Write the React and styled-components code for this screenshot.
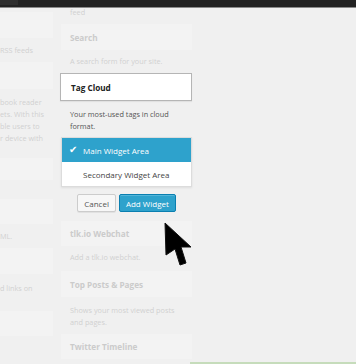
import React from "react";
import styled, { createGlobalStyle } from "styled-components";

const Global = createGlobalStyle`
  html, body { margin: 0; padding: 0; }
  body {
    width: 356px; height: 364px; overflow: hidden;
    background: #f0f0f0;
    font-family: "Open Sans", "Liberation Sans", sans-serif;
  }
`;

const Page = styled.div`
  position: relative;
  width: 356px;
  height: 364px;
  overflow: hidden;
  display: flex;
  flex-direction: column;
  background: #f0f0f0;
`;

const TopBar = styled.div`
  height: 7px;
  flex: none;
  background: #222;
  border-bottom: 1px solid #8a8a8a;
  display: flex;
`;

const BarTab = styled.div`
  width: 18px;
  height: 5px;
  background: #2e2e2e;
`;

const Content = styled.div`
  flex: 1;
  min-height: 0;
  overflow: hidden;
  display: flex;
  gap: 8px;
`;

const Column = styled.div`
  width: ${(p) => p.$w}px;
  flex: none;
  display: flex;
  flex-direction: column;
`;

const Title = styled.div`
  height: ${(p) => p.$h || 26}px;
  flex: none;
  box-sizing: border-box;
  display: flex;
  align-items: center;
  padding-left: ${(p) => (p.$active ? 10 : 9)}px;
  font-size: 8.2px;
  font-weight: 700;
  color: ${(p) => (p.$active ? "#222" : "#cbcbcb")};
  background: ${(p) => (p.$active ? "#fff" : "#f3f3f3")};
  border: ${(p) => (p.$active ? "1px solid #b5b5b5" : "none")};
  margin-left: ${(p) => (p.$active ? -1 : 0)}px;
  box-shadow: ${(p) => (p.$active ? "0 1px 1px rgba(0,0,0,0.06)" : "none")};
`;

const Desc = styled.div`
  padding: ${(p) => p.$pt ?? 6}px ${(p) => (p.$left ? 0 : 9)}px ${(p) => p.$pb ?? 6}px;
  font-size: 7.3px;
  line-height: 12px;
  color: ${(p) => (p.$active ? "#555" : "#d0d0d0")};
  white-space: pre-line;
  margin-top: ${(p) => p.$mt || 0}px;
`;

const Dropdown = styled.div`
  margin-top: 5px;
  background: #fff;
  border: 1px solid #dcdcdc;
  box-shadow: 0 1px 2px rgba(0, 0, 0, 0.08);
  display: flex;
  flex-direction: column;
`;

const Option = styled.div`
  height: 24px;
  display: flex;
  align-items: center;
  font-size: 8px;
  color: ${(p) => (p.$selected ? "#fff" : "#444")};
  background: ${(p) => (p.$selected ? "#2ea2cc" : "#fff")};
  padding-left: 7px;
`;

const Check = styled.span`
  width: 14px;
  font-size: 9.5px;
  line-height: 1;
  color: #fff;
`;

const Buttons = styled.div`
  display: flex;
  justify-content: center;
  gap: 3px;
  margin-top: 7px;
  margin-bottom: 9px;
`;

const Button = styled.div`
  height: 18px;
  box-sizing: border-box;
  padding: 0 6px;
  display: flex;
  align-items: center;
  border-radius: 2px;
  font-size: 8px;
  color: ${(p) => (p.$primary ? "#fff" : "#555")};
  background: ${(p) => (p.$primary ? "#2ea2cc" : "#f7f7f7")};
  border: 1px solid ${(p) => (p.$primary ? "#0a7fb0" : "#cccccc")};
  box-shadow: ${(p) =>
    p.$primary ? "inset 0 1px 0 rgba(120,200,230,0.5)" : "0 1px 0 rgba(0,0,0,0.06)"};
`;

const GreenStrip = styled.div`
  height: 2px;
  flex: none;
  margin-left: 190px;
  background: #c6dcbb;
`;

const Cursor = styled.svg`
  position: absolute;
  left: 160px;
  top: 218px;
  filter: blur(0.5px);
`;

export default function App() {
  return (
    <Page>
      <Global />
      <TopBar>
        <BarTab />
      </TopBar>
      <Content>
        <Column $w={53}>
          <Desc $left $pt={0} $pb={6} $mt={-2}>{" "}</Desc>
          <Title />
          <Desc $left>RSS feeds</Desc>
          <Title $h={27} />
          <Desc $left $pt={7} $pb={14}>{"book reader\nets. With this\nble users to\nr device with"}</Desc>
          <Title $h={22} />
          <Desc $left $pt={17} $pb={2}>{" "}</Desc>
          <Title $h={25} />
          <Desc $left $pt={6} $pb={6}>ML.</Desc>
          <Title />
          <Desc $left $pt={8} $pb={17}>d links on</Desc>
          <Title $h={25} />
        </Column>
        <Column $w={131}>
          <Desc $pt={0} $pb={6} $mt={-2}>feed</Desc>
          <Title>Search</Title>
          <Desc $pt={5}>A search form for your site.</Desc>
          <Title $active $h={28}>Tag Cloud</Title>
          <Desc $active $pt={7} $pb={0}>{"Your most-used tags in cloud\nformat."}</Desc>
          <Dropdown>
            <Option $selected>
              <Check>✔</Check>Main Widget Area
            </Option>
            <Option>
              <Check />Secondary Widget Area
            </Option>
          </Dropdown>
          <Buttons>
            <Button>Cancel</Button>
            <Button $primary>Add Widget</Button>
          </Buttons>
          <Title $h={25}>tlk.io Webchat</Title>
          <Desc $pt={5} $pb={8}>Add a tlk.io webchat.</Desc>
          <Title>Top Posts &amp; Pages</Title>
          <Desc $pt={7} $pb={6}>{"Shows your most viewed posts\nand pages."}</Desc>
          <Title $h={25}>Twitter Timeline</Title>
        </Column>
      </Content>
      <GreenStrip />
      <Cursor width="36" height="52" viewBox="0 0 36 52">
        <polygon
          points="5,5 6,37 15,31 20,47 26,45 21,29 31,29"
          fill="#000"
          stroke="#111"
          strokeWidth="1"
          strokeLinejoin="round"
        />
      </Cursor>
    </Page>
  );
}
